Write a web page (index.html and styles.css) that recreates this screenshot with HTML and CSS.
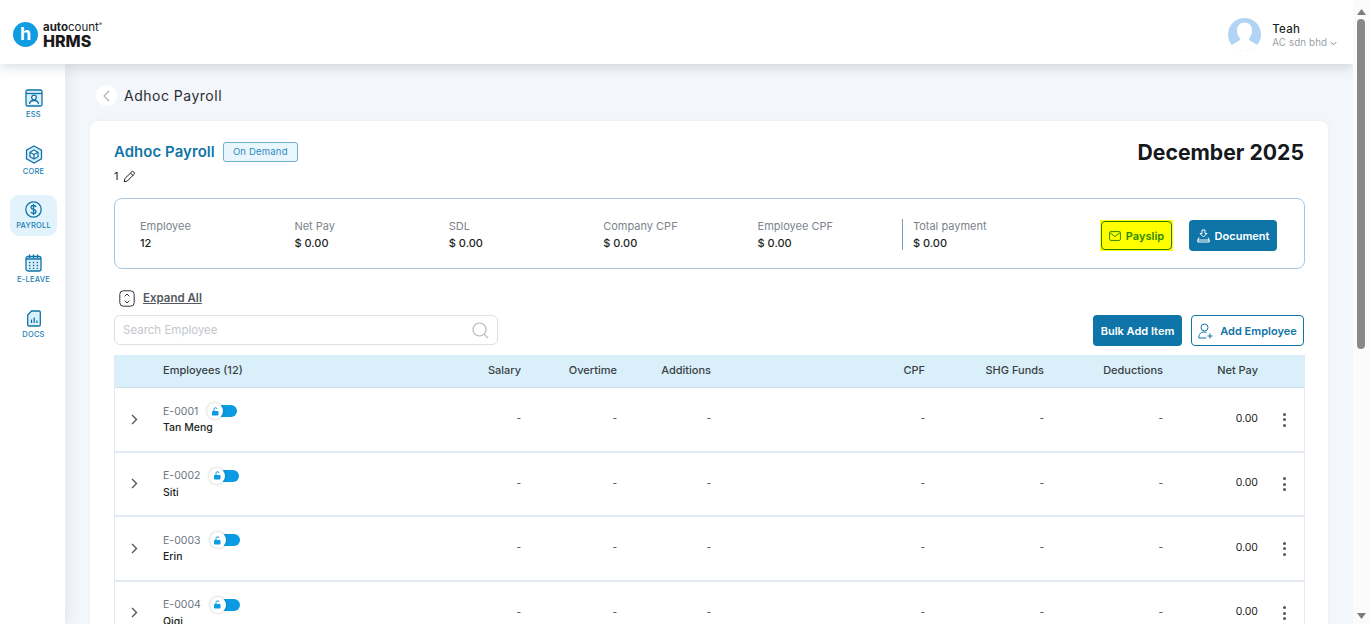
FILE: index.html
```html
<!DOCTYPE html>
<html lang="en">
<head>
<meta charset="utf-8">
<title>Adhoc Payroll</title>
<link rel="stylesheet" href="styles.css">
</head>
<body>
<div class="page">
  <header class="topbar">
    <div class="logo">
      <span class="logo-mark">h</span>
      <span class="logo-text"><span class="logo-auto"><b>auto</b>count<sup>®</sup></span><span class="logo-hrms">HRMS</span></span>
    </div>
    <div class="user">
      <svg class="avatar" width="33" height="33" viewBox="0 0 33 33"><circle cx="16.500" cy="16.500" r="16.500" fill="#b1d4f5"/><path d="M16.500 4.500c4.600 0 7.500 3.400 7.500 8 0 3.400-1.300 6-2.800 7.500-.6 1.300 0 2.300 1.600 3.200 1.800 1 4.400 2.300 6.700 3.800C26.500 30.800 21.800 33 16.500 33S6.500 30.800 3.500 27c2.300-1.500 4.900-2.800 6.700-3.800 1.600-.9 2.200-1.900 1.600-3.200-1.500-1.500-2.800-4.100-2.800-7.500 0-4.600 2.900-8 7.500-8z" fill="#fff"/></svg>
      <div class="user-text">
        <div class="user-name">Teah</div>
        <div class="user-org">AC sdn bhd <svg width="7" height="5" viewBox="0 0 7 5"><path d="M.7 1l2.800 2.800L6.300 1" fill="none" stroke="#888" stroke-width="1"/></svg></div>
      </div>
    </div>
  </header>
  <div class="body-row">
    <nav class="sidebar">
      <a class="nav-item nav-ess">
        <svg width="18" height="18" viewBox="0 0 18 18" fill="#dcf0fb" stroke="#0f75a8" stroke-width="1.300"><rect x="1" y="1" width="16" height="16" rx="1.500"/><path d="M1 4.500h16" fill="none"/><circle cx="9" cy="8.500" r="2.300" fill="#fff"/><path d="M4.500 15c.4-2.600 2-3.500 4.500-3.500s4.100.9 4.500 3.500" fill="#fff"/></svg>
        <span>ESS</span>
      </a>
      <a class="nav-item nav-core">
        <svg width="18" height="19" viewBox="0 0 18 19" fill="#dcf0fb" stroke="#0f75a8" stroke-width="1.300"><path d="M9 1l7.500 4.200v8.600L9 18l-7.500-4.200V5.200z"/><path d="M9 5l4 2.300v4.400L9 14l-4-2.300V7.300z" fill="#fff"/><path d="M5 7.300l4 2.300 4-2.300M9 9.600V14" fill="none"/></svg>
        <span>CORE</span>
      </a>
      <a class="nav-item nav-payroll active">
        <svg width="17" height="17" viewBox="0 0 17 17" fill="none" stroke="#0f75a8" stroke-width="1.300"><circle cx="8.500" cy="8.500" r="7.700"/><path d="M11 6c-.3-1-1.200-1.500-2.500-1.500C7 4.500 6 5.300 6 6.400c0 2.600 5 1.400 5 4.100 0 1.200-1 2-2.500 2-1.300 0-2.300-.6-2.600-1.600M8.500 3v11"/></svg>
        <span>PAYROLL</span>
      </a>
      <a class="nav-item nav-leave">
        <svg width="17" height="18" viewBox="0 0 17 18" fill="#dcf0fb" stroke="#0f75a8" stroke-width="1.300"><rect x="1" y="2.500" width="15" height="14.500" rx="2"/><path d="M4.500.5v3.500M8.500.5v3.500M12.500.5v3.500M1 5h15" fill="none"/><path d="M4 8.500h1.500M7.800 8.500h1.500M11.600 8.500h1.500M4 11.500h1.500M7.800 11.500h1.500M11.600 11.500h1.500M4 14.300h1.500M7.800 14.300h1.500M11.600 14.300h1.500" fill="none"/></svg>
        <span>E-LEAVE</span>
      </a>
      <a class="nav-item nav-docs">
        <svg width="14" height="17" viewBox="0 0 14 17" fill="#dcf0fb" stroke="#0f75a8" stroke-width="1.300"><path d="M4.500 1h7.500a1.300 1.300 0 0 1 1.300 1.300v12.400A1.300 1.300 0 0 1 12 16H2a1.300 1.300 0 0 1-1.300-1.300V5z"/><path d="M4.500 13V9.500M7.200 13V7.500M9.900 13v-2.500" fill="none"/></svg>
        <span>DOCS</span>
      </a>
    </nav>
    <main class="main">
      <div class="crumb">
        <span class="back"><svg width="7" height="12" viewBox="0 0 7 12"><path d="M6 1L1 6l5 5" fill="none" stroke="#a9b4c0" stroke-width="1.200"/></svg></span>
        <span class="crumb-title">Adhoc Payroll</span>
      </div>
      <section class="card">
        <div class="head">
          <div>
            <div class="title-line">
              <h1 class="title">Adhoc Payroll</h1>
              <span class="badge">On Demand</span>
            </div>
            <div class="sub-line">1
              <svg width="13" height="13" viewBox="0 0 13 13" fill="none" stroke="#222" stroke-width="1"><path d="M1.200 11.800l.7-3.200 6.600-6.600a1.500 1.500 0 0 1 2.200 0l.2.200a1.500 1.500 0 0 1 0 2.200l-6.600 6.600zM7.500 3l2.600 2.600"/></svg>
            </div>
          </div>
          <div class="period">December 2025</div>
        </div>
        <div class="summary">
          <div class="stats">
            <div class="stat"><div class="stat-label">Employee</div><div class="stat-value">12</div></div>
            <div class="stat"><div class="stat-label">Net Pay</div><div class="stat-value">$ 0.00</div></div>
            <div class="stat"><div class="stat-label">SDL</div><div class="stat-value">$ 0.00</div></div>
            <div class="stat"><div class="stat-label">Company CPF</div><div class="stat-value">$ 0.00</div></div>
            <div class="stat"><div class="stat-label">Employee CPF</div><div class="stat-value">$ 0.00</div></div>
            <div class="stat stat-total"><div class="stat-label">Total payment</div><div class="stat-value">$ 0.00</div></div>
          </div>
          <div class="summary-actions">
            <span class="highlight"><button class="btn btn-payslip"><svg width="12" height="10" viewBox="0 0 12 10" fill="none" stroke="#2c8a00" stroke-width="1"><rect x=".6" y=".6" width="10.800" height="8.800" rx="1"/><path d="M.8 1.500L6 5.500l5.200-4"/></svg>Payslip</button></span>
            <button class="btn btn-solid btn-doc"><svg width="13" height="14" viewBox="0 0 13 14" fill="none" stroke="#fff" stroke-width="1"><path d="M5 1h3v3.500h2L6.500 8 3 4.500h2zM2 8.500L.8 11v2h11.400v-2L11 8.500M.8 11h11.400"/></svg>Document</button>
          </div>
        </div>
        <div class="expand">
          <svg width="16" height="17" viewBox="0 0 16 17" fill="none" stroke="#333" stroke-width="1"><rect x=".8" y=".8" width="14.400" height="15.400" rx="3.500"/><path d="M5.700 6.300L8 4l2.300 2.300M5.700 10.700L8 13l2.300-2.300"/></svg>
          <span>Expand All</span>
        </div>
        <div class="tools">
          <label class="search">
            <input class="search-input" placeholder="Search Employee">
            <svg width="17" height="17" viewBox="0 0 17 17" fill="none" stroke="#b4b8bd" stroke-width="1.200"><circle cx="7.500" cy="7.500" r="6.500"/><path d="M12.300 12.300L16 16"/></svg>
          </label>
          <div class="tool-actions">
            <button class="btn btn-solid btn-bulk">Bulk Add Item</button>
            <button class="btn btn-outline"><svg width="16" height="16" viewBox="0 0 16 16" fill="none" stroke="#0f75a8" stroke-width="1"><circle cx="6.500" cy="4.500" r="3.500"/><path d="M.8 15c.2-3.500 1.500-6 5.200-6 1 0 1.800.2 2.500.6M.8 15h7.500M12 10.500v5M9.500 13h5"/></svg>Add Employee</button>
          </div>
        </div>
        <div class="table">
          <div class="tr th">
            <span></span><span class="c-name">Employees (12)</span><span class="num">Salary</span><span class="num">Overtime</span><span class="num">Additions</span><span class="num">CPF</span><span class="num">SHG Funds</span><span class="num">Deductions</span><span class="num">Net Pay</span><span></span>
          </div>
          <div class="tr row">
            <svg class="chev" width="7" height="11" viewBox="0 0 7 11"><path d="M1 1l4.500 4.500L1 10" fill="none" stroke="#555" stroke-width="1.400"/></svg>
            <div class="c-name"><div class="emp-top"><span class="emp-id">E-0001</span><span class="toggle"><span class="knob"><svg width="9" height="9" viewBox="0 0 9 9"><rect x="1" y="4" width="6.500" height="4.500" rx=".8" fill="#0a9be3"/><path d="M3 4V2.500a1.500 1.500 0 0 1 3-.5" fill="none" stroke="#0a9be3" stroke-width="1"/></svg></span><span class="pill"></span></span></div><div class="emp-name">Tan Meng</div></div>
            <span class="num dash">-</span><span class="num dash">-</span><span class="num dash">-</span><span class="num dash">-</span><span class="num dash">-</span><span class="num dash">-</span><span class="num pay">0.00</span>
            <span class="kebab"><i></i><i></i><i></i></span>
          </div>
          <div class="tr row">
            <svg class="chev" width="7" height="11" viewBox="0 0 7 11"><path d="M1 1l4.500 4.500L1 10" fill="none" stroke="#555" stroke-width="1.400"/></svg>
            <div class="c-name"><div class="emp-top"><span class="emp-id">E-0002</span><span class="toggle"><span class="knob"><svg width="9" height="9" viewBox="0 0 9 9"><rect x="1" y="4" width="6.500" height="4.500" rx=".8" fill="#0a9be3"/><path d="M3 4V2.500a1.500 1.500 0 0 1 3-.5" fill="none" stroke="#0a9be3" stroke-width="1"/></svg></span><span class="pill"></span></span></div><div class="emp-name">Siti</div></div>
            <span class="num dash">-</span><span class="num dash">-</span><span class="num dash">-</span><span class="num dash">-</span><span class="num dash">-</span><span class="num dash">-</span><span class="num pay">0.00</span>
            <span class="kebab"><i></i><i></i><i></i></span>
          </div>
          <div class="tr row">
            <svg class="chev" width="7" height="11" viewBox="0 0 7 11"><path d="M1 1l4.500 4.500L1 10" fill="none" stroke="#555" stroke-width="1.400"/></svg>
            <div class="c-name"><div class="emp-top"><span class="emp-id">E-0003</span><span class="toggle"><span class="knob"><svg width="9" height="9" viewBox="0 0 9 9"><rect x="1" y="4" width="6.500" height="4.500" rx=".8" fill="#0a9be3"/><path d="M3 4V2.500a1.500 1.500 0 0 1 3-.5" fill="none" stroke="#0a9be3" stroke-width="1"/></svg></span><span class="pill"></span></span></div><div class="emp-name">Erin</div></div>
            <span class="num dash">-</span><span class="num dash">-</span><span class="num dash">-</span><span class="num dash">-</span><span class="num dash">-</span><span class="num dash">-</span><span class="num pay">0.00</span>
            <span class="kebab"><i></i><i></i><i></i></span>
          </div>
          <div class="tr row">
            <svg class="chev" width="7" height="11" viewBox="0 0 7 11"><path d="M1 1l4.500 4.500L1 10" fill="none" stroke="#555" stroke-width="1.400"/></svg>
            <div class="c-name"><div class="emp-top"><span class="emp-id">E-0004</span><span class="toggle"><span class="knob"><svg width="9" height="9" viewBox="0 0 9 9"><rect x="1" y="4" width="6.500" height="4.500" rx=".8" fill="#0a9be3"/><path d="M3 4V2.500a1.500 1.500 0 0 1 3-.5" fill="none" stroke="#0a9be3" stroke-width="1"/></svg></span><span class="pill"></span></span></div><div class="emp-name">Qiqi</div></div>
            <span class="num dash">-</span><span class="num dash">-</span><span class="num dash">-</span><span class="num dash">-</span><span class="num dash">-</span><span class="num dash">-</span><span class="num pay">0.00</span>
            <span class="kebab"><i></i><i></i><i></i></span>
          </div>
        </div>
      </section>
    </main>
  </div>
</div>
<div class="scrollbar">
  <svg width="9" height="6" viewBox="0 0 9 6"><path d="M4.500 0L9 6H0z" fill="#7c7c7c"/></svg>
  <div class="thumb"></div>
  <div class="track"></div>
  <svg width="9" height="6" viewBox="0 0 9 6"><path d="M4.500 6L9 0H0z" fill="#7c7c7c"/></svg>
</div>
</body>
</html>
```
FILE: styles.css
```css
* { box-sizing: border-box; }
html, body { margin: 0; height: 100%; overflow: hidden; }
body {
  display: flex;
  font-family: Inter, "Liberation Sans", sans-serif;
  color: #1c1f23;
  background: #f3f6fa;
}
.page { flex: 1; min-width: 0; height: 624px; display: flex; flex-direction: column; overflow: hidden; }

.topbar {
  height: 64px; flex: none; background: #fff;
  display: flex; align-items: center; justify-content: space-between;
  padding: 0 16px 6px 13px;
  box-shadow: 0 2px 12px rgba(60, 75, 100, .22);
  position: relative; z-index: 2;
}
.logo { display: flex; align-items: flex-start; gap: 5px; margin-top: 13px; }
.logo-mark {
  width: 25px; height: 25px; border-radius: 50%; background: #109ce0; color: #fff;
  font-weight: 700; font-size: 18px; line-height: 23px; text-align: center;
}
.logo-text { display: flex; flex-direction: column; }
.logo-auto { font-size: 11.500px; line-height: 11px; font-weight: 400; color: #222; white-space: nowrap; }
.logo-auto b { font-weight: 700; }
.logo-auto sup { font-size: 5px; line-height: 0; }
.logo-hrms { font-size: 16px; line-height: 16px; font-weight: 800; color: #1a1a1a; }

.user { display: flex; align-items: center; gap: 11px; margin-top: 11px; }
.avatar { display: block; }
.user-text { padding-top: 2px; }
.user-name { font-size: 11.500px; line-height: 15px; font-weight: 500; letter-spacing: .2px; }
.user-org { font-size: 9.800px; line-height: 12px; color: #9b9fa5; white-space: nowrap; letter-spacing: .1px; }

.body-row { flex: 1; min-height: 0; display: flex; }
.sidebar {
  width: 65px; flex: none; background: #fff; padding: 25px 0 0 10px;
  display: flex; flex-direction: column; align-items: flex-start;
  box-shadow: 2px 0 14px rgba(60, 75, 100, .09);
  position: relative; z-index: 1;
}
.nav-item {
  width: 47px; display: flex; flex-direction: column; align-items: center; justify-content: center;
  font-size: 7.500px; font-weight: 500; line-height: 9px; color: #1a80b3; letter-spacing: .2px; border-radius: 9px; gap: 3px;
}
.nav-item svg { display: block; }
.nav-ess { height: 30px; }
.nav-core { height: 31px; margin-top: 25.500px; }
.nav-payroll { height: 41px; margin-top: 19.500px; }
.nav-payroll.active { background: #e3f3fc; }
.nav-leave { height: 30px; margin-top: 18px; }
.nav-docs { height: 29px; margin-top: 25.500px; }

.main { flex: 1; min-width: 0; padding: 21px 25px 0; }
.crumb { display: flex; align-items: center; gap: 7px; margin-left: 6px; height: 21px; }
.back {
  width: 21px; height: 21px; border-radius: 50%; background: #fff;
  display: flex; align-items: center; justify-content: center;
}
.crumb-title { font-size: 14px; color: #2a2d31; letter-spacing: .5px; }

.card {
  margin-top: 15px; background: #fff; border-radius: 8px; height: 600px;
  padding: 20px 23px 0 24px; box-shadow: 0 0 4px rgba(60, 75, 100, .06);
}
.head { display: flex; justify-content: space-between; align-items: flex-start; }
.title-line { display: flex; align-items: center; gap: 8px; height: 21px; }
.title { margin: 0; font-size: 14.900px; font-weight: 600; color: #0f75a8; letter-spacing: .1px; }
.badge {
  width: 75px; height: 20px; display: flex; align-items: center; justify-content: center;
  border: 1px solid #6eaed0; border-radius: 3px; background: #eaf6fd;
  font-size: 9.500px; color: #2b8bbf; letter-spacing: .2px;
}
.sub-line { display: flex; align-items: center; gap: 5px; margin-top: 6px; font-size: 11px; line-height: 16px; }
.period { font-size: 21.200px; font-weight: 700; line-height: 22px; color: #15181c; margin-right: 1px; }

.summary {
  margin-top: 14px; height: 71px; display: flex; align-items: center; justify-content: space-between;
  border: 1px solid #a9c6de; border-radius: 8px; padding: 0 27px 0 25px;
}
.stats { display: grid; grid-template-columns: repeat(5, 154.400px) auto; margin-top: 2px; }
.stat-label { font-size: 11px; line-height: 14px; color: #7c838c; }
.stat-value { font-size: 11px; line-height: 14px; margin-top: 3px; font-weight: 500; color: #1c1f23; }
.stat-total { border-left: 1px solid #7f9db5; margin-left: -10px; padding-left: 10px; }
.summary-actions { display: flex; gap: 16px; margin-top: 4px; }
.highlight { display: flex; background: #ffff00; padding: 1px; }
.btn {
  height: 31px; display: inline-flex; align-items: center; justify-content: center; gap: 5px;
  font-family: inherit; font-size: 11px; font-weight: 600; border-radius: 4px; border: 0; padding: 0; cursor: pointer;
}
.btn-solid { background: #0f75a8; color: #fff; }
.btn-payslip { width: 71px; height: 29px; background: #ffff00; border: 1px solid #2c7a00; color: #2c8a00; }
.btn-doc { width: 88px; }
.btn-bulk { width: 89px; }
.btn-outline { width: 113px; background: #fff; color: #0f75a8; border: 1px solid #0f75a8; gap: 6px; }

.expand { display: flex; align-items: center; gap: 8px; margin: 20px 0 0 5px; height: 18px; font-size: 11.500px; font-weight: 600; color: #55595e; }
.expand span { text-decoration: underline; }

.tools { margin-top: 8px; display: flex; align-items: flex-start; justify-content: space-between; }
.search {
  width: 384px; height: 30px; display: flex; align-items: center; justify-content: space-between;
  border: 1px solid #dde1e6; border-radius: 6px; padding: 0 8px;
}
.search-input {
  flex: 1; min-width: 0; border: 0; outline: 0; background: none; padding: 0;
  font-family: inherit; font-size: 11.500px;
}
.search-input::placeholder { color: #c4c7cb; opacity: 1; }
.tool-actions { display: flex; gap: 9px; margin-right: 1px; }

.table { margin-top: 9px; border: 1px solid #e2e9f1; border-top: 0; }
.tr {
  display: grid; align-items: center;
  grid-template-columns: 48px 310px 48px 96px 94px 214px 119px 119px 95px 1fr;
}
.th { height: 33px; padding-bottom: 2px; background: #d9f0fb; border-bottom: 1px solid #cfe0ec; font-size: 11px; font-weight: 500; color: #3a3e44; }
.row { height: 64.500px; border-bottom: 2px solid #e3eaf2; font-size: 10px; }
.num { text-align: right; }
.dash { color: #444; margin-top: -2px; }
.pay { font-size: 10.500px; color: #222; margin-top: -2px; }
.chev { justify-self: start; margin-left: 16px; }
.emp-top { display: flex; align-items: center; gap: 9px; height: 16px; }
.emp-id { font-size: 10.500px; color: #6e7480; }
.emp-name { font-size: 10.500px; line-height: 14px; margin-top: 2px; color: #1c1f23; font-weight: 500; }
.toggle { display: flex; align-items: center; height: 16px; }
.knob {
  width: 16px; height: 16px; border-radius: 50%; background: #fff; display: flex; align-items: center; justify-content: center;
  box-shadow: 0 0 3px rgba(0, 0, 0, .25); position: relative; z-index: 1;
}
.pill { width: 22px; height: 12px; margin-left: -8px; border-radius: 0 7px 7px 0; background: #0a9be3; }
.kebab { display: flex; flex-direction: column; align-items: center; gap: 2.500px; justify-self: end; margin: 1px 18px 0 0; }
.kebab i { width: 3px; height: 3px; border-radius: 50%; background: #555; }

.scrollbar {
  width: 16px; flex: none; height: 624px; background: #fbfbfb;
  display: flex; flex-direction: column; align-items: center; padding: 9px 0 5px;
}
.thumb { width: 8px; height: 330px; margin-top: 4px; border-radius: 4px; background: #888; }
.track { flex: 1; }
```
